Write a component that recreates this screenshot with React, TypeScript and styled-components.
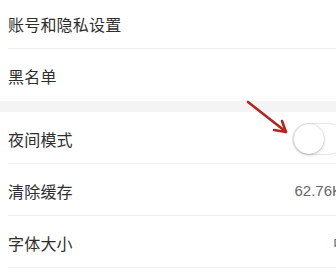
import React from "react";
import styled, { createGlobalStyle } from "styled-components";

const Global = createGlobalStyle`
  html, body { margin: 0; padding: 0; background: #fff; overflow: hidden; }
  body { font-family: "Noto Sans CJK SC", "Noto Sans", sans-serif; }
`;

const Page = styled.div`
  position: relative;
  width: 336px;
  height: 272px;
  overflow: hidden;
  background: #fff;
`;

const List = styled.div`
  width: 356px;
  margin-top: -3px;
  display: flex;
  flex-direction: column;
`;

const Group = styled.div`
  display: flex;
  flex-direction: column;
  background: #fff;
`;

const Gap = styled.div`
  height: 11px;
  background: #f4f4f5;
`;

const Row = styled.div`
  padding-left: 8px;
`;

const RowInner = styled.div<{ $last?: boolean }>`
  height: 51px;
  display: flex;
  align-items: center;
  justify-content: space-between;
  padding-right: 8px;
  border-bottom: 1px solid ${(p) => (p.$last ? "transparent" : "#eeeeee")};
`;

const Label = styled.span`
  font-size: 16px;
  color: #2e2e2e;
  letter-spacing: 0.2px;
  padding-top: 2px;
`;

const Value = styled.span<{ $mr?: number }>`
  font-family: "Liberation Sans", "Noto Sans CJK SC", sans-serif;
  font-size: 15px;
  color: #666;
  margin-right: ${(p) => p.$mr ?? 0}px;
  padding-top: 2px;
`;

const Track = styled.div`
  width: 50px;
  height: 30px;
  border: 1px solid #e6e6e6;
  border-radius: 16px;
  background: #fff;
  margin-right: 3px;
  display: flex;
  align-items: center;
  padding-left: 1px;
  margin-top: 2px;
`;

const Knob = styled.div`
  width: 30px;
  height: 30px;
  border-radius: 50%;
  background: #fff;
  box-shadow: 0 1px 3px rgba(0, 0, 0, 0.25), 0 0 1px rgba(0, 0, 0, 0.2);
`;

const Arrow = styled.svg`
  position: absolute;
  left: 0;
  top: 0;
  pointer-events: none;
`;

export default function App() {
  return (
    <>
      <Global />
      <Page>
        <List>
          <Group>
            <Row>
              <RowInner>
                <Label>账号和隐私设置</Label>
              </RowInner>
            </Row>
            <Row>
              <RowInner $last>
                <Label>黑名单</Label>
              </RowInner>
            </Row>
          </Group>
          <Gap />
          <Group>
            <Row>
              <RowInner>
                <Label>夜间模式</Label>
                <Track>
                  <Knob />
                </Track>
              </RowInner>
            </Row>
            <Row>
              <RowInner>
                <Label>清除缓存</Label>
                <Value $mr={6}>62.76K</Value>
              </RowInner>
            </Row>
            <Row>
              <RowInner>
                <Label>字体大小</Label>
                <Value>中</Value>
              </RowInner>
            </Row>
          </Group>
        </List>
        <Arrow width="336" height="272" viewBox="0 0 336 272">
          <g stroke="#b3261e" strokeWidth="2.6" strokeLinecap="round" fill="none">
            <line x1="248" y1="102" x2="285" y2="131" />
            <line x1="286" y1="132" x2="282" y2="121" />
            <line x1="286" y1="132" x2="274" y2="130" />
          </g>
        </Arrow>
      </Page>
    </>
  );
}
